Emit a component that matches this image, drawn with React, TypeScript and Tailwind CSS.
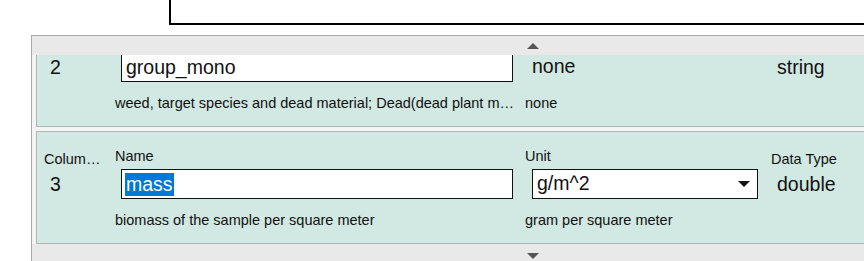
import React from 'react';

type Row = {
  index: string;
  name: string;
  selected?: boolean;
  description: string;
  unit: string;
  unitEditable?: boolean;
  unitDescription: string;
  dataType: string;
};

const rows: Row[] = [
  {
    index: '2',
    name: 'group_mono',
    description: 'weed, target species and dead material; Dead(dead plant material)',
    unit: 'none',
    unitDescription: 'none',
    dataType: 'string',
  },
  {
    index: '3',
    name: 'mass',
    selected: true,
    description: 'biomass of the sample per square meter',
    unit: 'g/m^2',
    unitEditable: true,
    unitDescription: 'gram per square meter',
    dataType: 'double',
  },
];

function ArrowUp() {
  return (
    <svg width="12" height="6" viewBox="0 0 12 6">
      <path d="M0 6 L6 0 L12 6 Z" fill="#555" />
    </svg>
  );
}

function ArrowDown({ color = '#555' }: { color?: string }) {
  return (
    <svg width="12" height="6" viewBox="0 0 12 6">
      <path d="M0 0 L12 0 L6 6 Z" fill={color} />
    </svg>
  );
}

function ColumnRow({ row }: { row: Row }) {
  return (
    <div className="flex h-[113px] shrink-0 items-start border border-[#b4b4b4] bg-[#d2e8e2] pl-[7px] text-[#111]">
      {/* column index */}
      <div className="mt-[17px] flex w-[71px] shrink-0 flex-col">
        <div className="w-[57px] truncate text-[14.5px] leading-[20px]">Column #</div>
        <div className="mt-[3px] pl-[6px] text-[19.5px] leading-[24px]">{row.index}</div>
      </div>

      {/* name */}
      <div className="mt-[14px] flex w-[410px] shrink-0 flex-col">
        <div className="text-[14.5px] leading-[20px]">Name</div>
        <div className="ml-[6px] mt-[3px] flex h-[30px] w-[392px] items-center border border-[#111] bg-white pl-[3px] text-[19.5px]">
          {row.selected ? (
            <span className="bg-[#0078d7] px-px leading-[23px] text-white">{row.name}</span>
          ) : (
            <span className="px-px leading-[23px]">{row.name}</span>
          )}
        </div>
        <div className="mt-[11px] w-[403px] truncate text-[14.5px] leading-[20px]">{row.description}</div>
      </div>

      {/* unit */}
      <div className="mt-[14px] flex w-[246px] shrink-0 flex-col">
        <div className="text-[14.5px] leading-[20px]">Unit</div>
        {row.unitEditable ? (
          <div className="ml-[7px] mt-[3px] flex h-[30px] w-[226px] items-center justify-between border border-[#111] bg-white pl-[4px] pr-[7px] text-[19.5px]">
            <span>{row.unit}</span>
            <ArrowDown color="#111" />
          </div>
        ) : (
          <div className="ml-[7px] mt-[3px] flex h-[30px] items-center text-[19.5px]">{row.unit}</div>
        )}
        <div className="mt-[11px] text-[14.5px] leading-[20px]">{row.unitDescription}</div>
      </div>

      {/* data type */}
      <div className="mt-[17px] flex shrink-0 flex-col">
        <div className="text-[14.5px] leading-[20px]">Data Type</div>
        <div className="mt-[3px] pl-[6px] text-[19.5px] leading-[24px]">{row.dataType}</div>
      </div>
    </div>
  );
}

export default function App() {
  return (
    <div
      className="relative h-[261px] w-[864px] overflow-hidden bg-white"
      style={{ fontFamily: '"Liberation Sans", Arial, sans-serif' }}
    >
      {/* panel above */}
      <div className="ml-[169px] h-[25px] w-[760px] border-b-2 border-l-2 border-black bg-white" />

      {/* column list */}
      <div className="ml-[31px] mt-[10px] flex h-[226px] w-[1000px] flex-col border-l border-t border-[#aaa] bg-[#f4f4f4]">
        <div className="flex h-[19px] shrink-0 items-center bg-[#e9e9e9] pl-[495px]">
          <ArrowUp />
        </div>
        <div className="h-[189px] shrink-0 overflow-hidden pl-[4px]">
          <div className="-mt-[41px] flex flex-col gap-[4px]">
            {rows.map((r) => (
              <ColumnRow key={r.index} row={r} />
            ))}
          </div>
        </div>
        <div className="flex h-[17px] shrink-0 items-start bg-[#e9e9e9] pl-[495px] pt-[9px]">
          <ArrowDown />
        </div>
      </div>
    </div>
  );
}
